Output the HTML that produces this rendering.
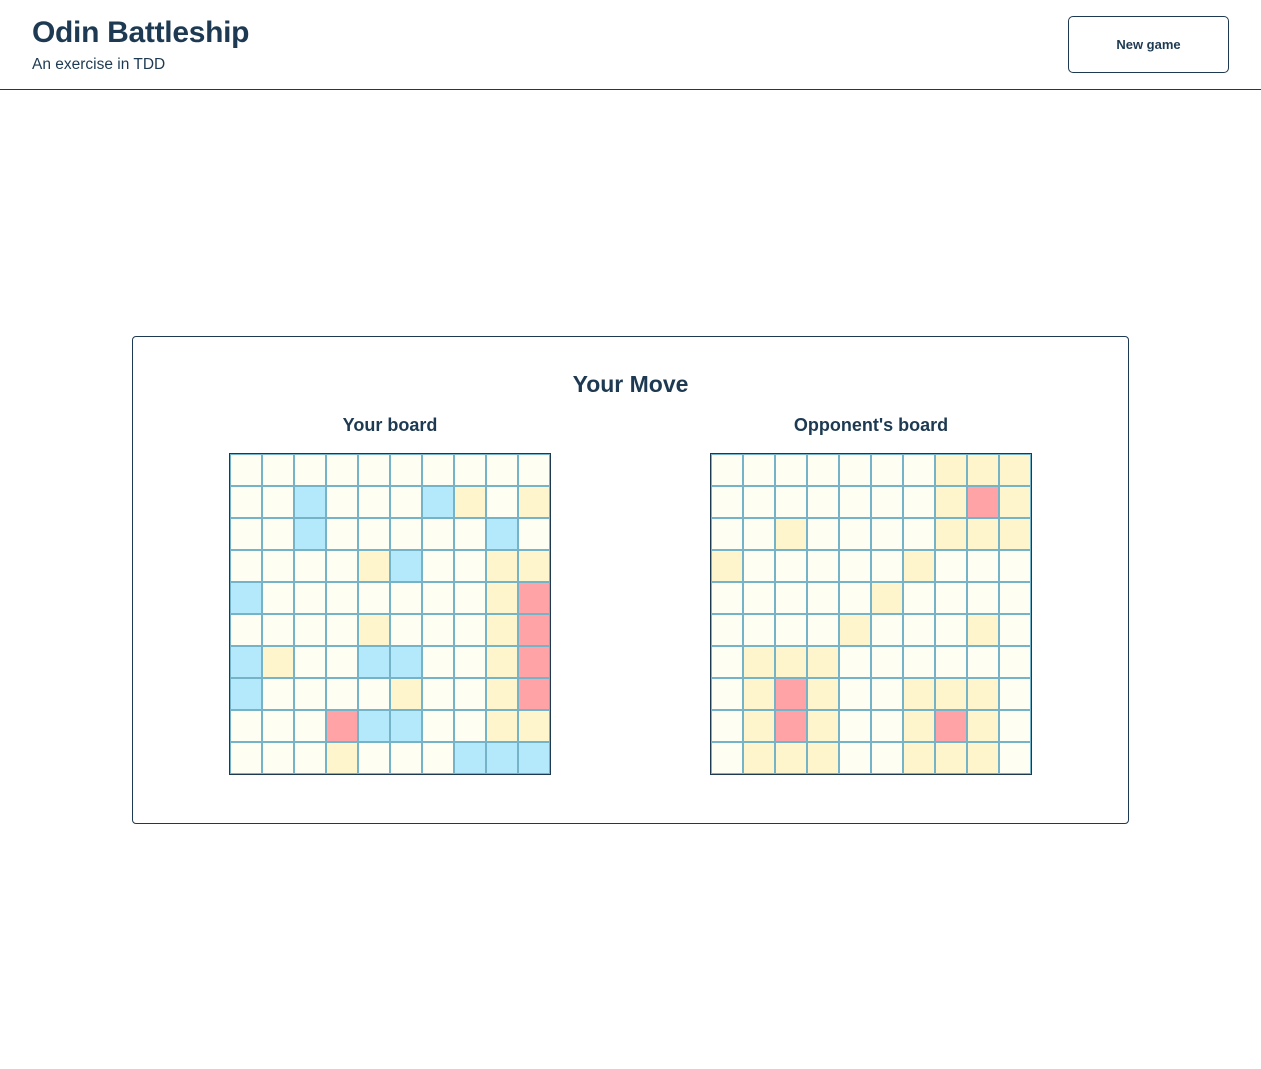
<!DOCTYPE html>
<html><head><meta charset="utf-8"><style>
*{box-sizing:border-box;margin:0;padding:0}
body{width:1261px;height:1069px;background:#fff;font-family:"Liberation Sans",Arial,sans-serif;color:#1d3a52;position:relative;overflow:hidden}
header{position:absolute;left:0;top:0;width:1261px;height:90px;border-bottom:1px solid #1d3a52}
h1{position:absolute;left:32px;top:16px;font-size:30px;font-weight:bold;letter-spacing:-0.3px}
.sub{position:absolute;left:32px;top:56px;font-size:15.5px}
.btn{position:absolute;left:1068px;top:16px;width:161px;height:57px;border:1px solid #1d3a52;border-radius:5px;font-size:13px;font-weight:bold;display:flex;align-items:center;justify-content:center}
.card{position:absolute;left:132px;top:336px;width:997px;height:488px;border:1px solid #1d3a52;border-radius:4px}
.t{position:absolute;left:0;width:100%;text-align:center;top:34px;font-size:23px;font-weight:bold}
.bt{position:absolute;top:78px;font-size:18px;font-weight:bold;text-align:center;width:322px}
.b{position:absolute;top:116px;width:322px;height:322px;border:1px solid #1d3a52;display:grid;grid-template-columns:repeat(10,32px);grid-template-rows:repeat(10,32px)}
.b div{border:1px solid #75b3c9;background:#fffef3}
.b .y{background:#fff5cc}.b .s{background:#b3e9fb}.b .r{background:#ffa3a6}
</style></head><body>
<header><h1>Odin Battleship</h1><div class="sub">An exercise in TDD</div><div class="btn">New game</div></header>
<div class="card">
<div class="t">Your Move</div>
<div class="bt" style="left:96px">Your board</div>
<div class="bt" style="left:577px">Opponent's board</div>
<div class="b" style="left:96px">
<div></div><div></div><div></div><div></div><div></div><div></div><div></div><div></div><div></div><div></div>
<div></div><div></div><div class="s"></div><div></div><div></div><div></div><div class="s"></div><div class="y"></div><div></div><div class="y"></div>
<div></div><div></div><div class="s"></div><div></div><div></div><div></div><div></div><div></div><div class="s"></div><div></div>
<div></div><div></div><div></div><div></div><div class="y"></div><div class="s"></div><div></div><div></div><div class="y"></div><div class="y"></div>
<div class="s"></div><div></div><div></div><div></div><div></div><div></div><div></div><div></div><div class="y"></div><div class="r"></div>
<div></div><div></div><div></div><div></div><div class="y"></div><div></div><div></div><div></div><div class="y"></div><div class="r"></div>
<div class="s"></div><div class="y"></div><div></div><div></div><div class="s"></div><div class="s"></div><div></div><div></div><div class="y"></div><div class="r"></div>
<div class="s"></div><div></div><div></div><div></div><div></div><div class="y"></div><div></div><div></div><div class="y"></div><div class="r"></div>
<div></div><div></div><div></div><div class="r"></div><div class="s"></div><div class="s"></div><div></div><div></div><div class="y"></div><div class="y"></div>
<div></div><div></div><div></div><div class="y"></div><div></div><div></div><div></div><div class="s"></div><div class="s"></div><div class="s"></div>
</div>
<div class="b" style="left:577px">
<div></div><div></div><div></div><div></div><div></div><div></div><div></div><div class="y"></div><div class="y"></div><div class="y"></div>
<div></div><div></div><div></div><div></div><div></div><div></div><div></div><div class="y"></div><div class="r"></div><div class="y"></div>
<div></div><div></div><div class="y"></div><div></div><div></div><div></div><div></div><div class="y"></div><div class="y"></div><div class="y"></div>
<div class="y"></div><div></div><div></div><div></div><div></div><div></div><div class="y"></div><div></div><div></div><div></div>
<div></div><div></div><div></div><div></div><div></div><div class="y"></div><div></div><div></div><div></div><div></div>
<div></div><div></div><div></div><div></div><div class="y"></div><div></div><div></div><div></div><div class="y"></div><div></div>
<div></div><div class="y"></div><div class="y"></div><div class="y"></div><div></div><div></div><div></div><div></div><div></div><div></div>
<div></div><div class="y"></div><div class="r"></div><div class="y"></div><div></div><div></div><div class="y"></div><div class="y"></div><div class="y"></div><div></div>
<div></div><div class="y"></div><div class="r"></div><div class="y"></div><div></div><div></div><div class="y"></div><div class="r"></div><div class="y"></div><div></div>
<div></div><div class="y"></div><div class="y"></div><div class="y"></div><div></div><div></div><div class="y"></div><div class="y"></div><div class="y"></div><div></div>
</div>
</div>
</body></html>
